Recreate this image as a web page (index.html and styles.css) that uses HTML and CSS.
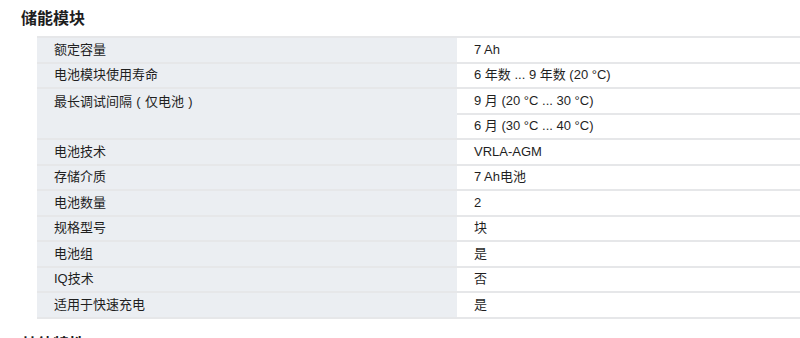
FILE: index.html
```html
<!DOCTYPE html>
<html lang="zh-CN">
<head>
<meta charset="utf-8">
<title>储能模块</title>
<link rel="stylesheet" href="styles.css">
</head>
<body>
<section class="block">
  <h2 class="title">储能模块</h2>
  <table class="spec">
    <tr><td class="label">额定容量</td><td class="value">7 Ah</td></tr>
    <tr><td class="label">电池模块使用寿命</td><td class="value">6 年数 ... 9 年数 (20 °C)</td></tr>
    <tr><td class="label top" rowspan="2">最长调试间隔<span class="paren">(</span>仅电池<span class="paren">)</span></td><td class="value">9 月 (20 °C ... 30 °C)</td></tr>
    <tr><td class="value">6 月 (30 °C ... 40 °C)</td></tr>
    <tr><td class="label">电池技术</td><td class="value">VRLA-AGM</td></tr>
    <tr><td class="label">存储介质</td><td class="value">7 Ah电池</td></tr>
    <tr><td class="label">电池数量</td><td class="value">2</td></tr>
    <tr><td class="label">规格型号</td><td class="value">块</td></tr>
    <tr><td class="label">电池组</td><td class="value">是</td></tr>
    <tr><td class="label">IQ技术</td><td class="value">否</td></tr>
    <tr><td class="label">适用于快速充电</td><td class="value">是</td></tr>
  </table>
</section>
<section class="block next">
  <h2 class="title">其他特性</h2>
</section>
</body>
</html>
```
FILE: styles.css
```css
html, body {
  margin: 0;
  padding: 0;
  background: #ffffff;
}
body {
  font-family: "Liberation Sans", "Noto Sans CJK SC", sans-serif;
  color: #222222;
  width: 800px;
  height: 338px;
  overflow: hidden;
}
.block {
  padding: 0;
}
.title {
  margin: 0;
  padding: 9px 0 0 21px;
  height: 27px;
  font-size: 16px;
  line-height: 20px;
  font-weight: 600;
  color: #1e1e1e;
}
.spec {
  margin-left: 37px;
  width: 763px;
  border-collapse: collapse;
  font-size: 13px;
  line-height: 16px;
}
.spec td {
  height: 23.5px;
  padding: 0 0 0 17px;
  border-top: 2px solid #e6e7e9;
  border-bottom: 2px solid #e6e7e9;
  vertical-align: middle;
}
.label {
  width: 403px;
  background: #ebeef2;
  color: #1f1f1f;
}
.paren {
  display: inline-block;
  width: 13px;
  text-align: center;
}
.label.top {
  vertical-align: top;
  padding-top: 5px;
}
.value {
  background: #ffffff;
  color: #1f1f1f;
}
.next .title {
  padding-top: 16px;
}
```
